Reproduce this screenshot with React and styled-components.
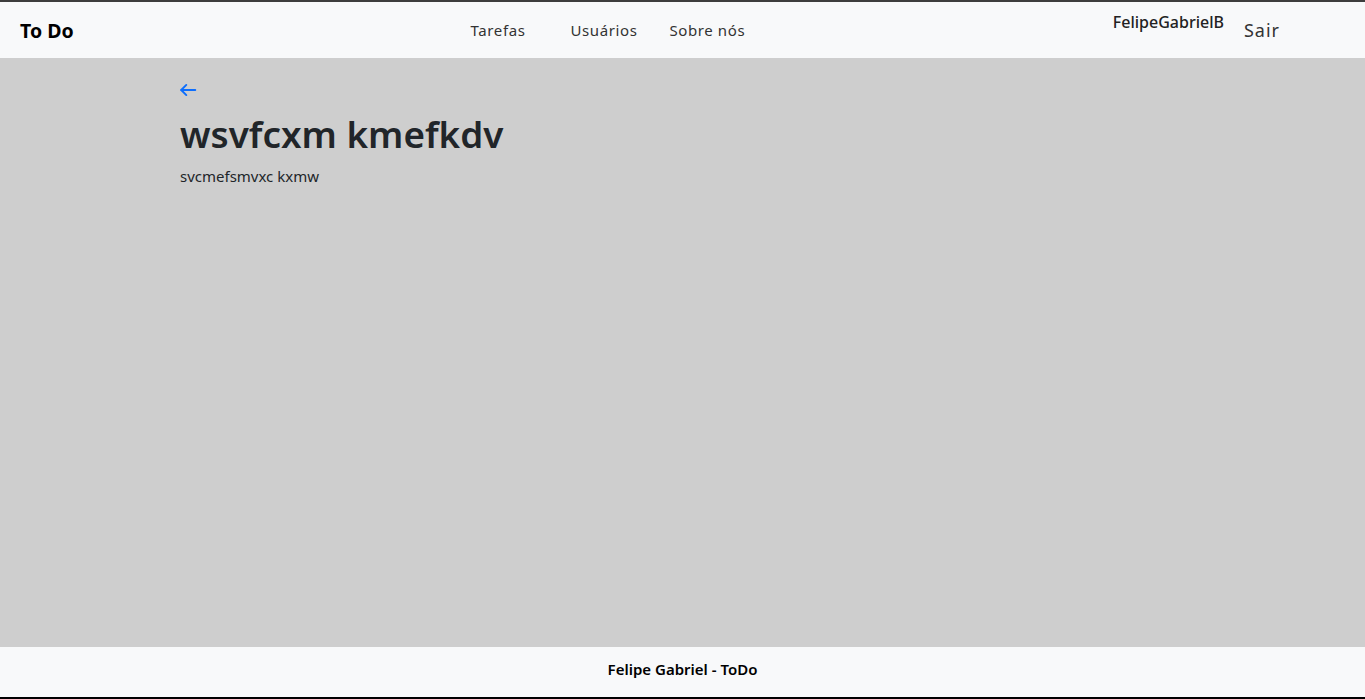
import React from "react";
import styled, { createGlobalStyle } from "styled-components";

const Global = createGlobalStyle`
  html, body { margin: 0; padding: 0; height: 100%; }
  body { font-family: "Noto Sans", "Open Sans", sans-serif; color: #212529; }
  #root { height: 100%; }
`;

const Page = styled.div`
  height: 100vh;
  display: flex;
  flex-direction: column;
  border-top: 2px solid #3d3d3d;
  border-bottom: 2px solid #000;
  box-sizing: border-box;
  background: #cecece;
`;

const Header = styled.header`
  height: 56px;
  flex: none;
  background: #f8f9fa;
  display: flex;
  align-items: center;
  padding: 0 85px 0 20px;
`;

const Brand = styled.div`
  font-size: 19.5px;
  font-weight: 700;
  color: #000;
  margin-top: 1px;
`;

const Nav = styled.nav`
  display: flex;
  margin-left: 397px;
`;

const NavLink = styled.a`
  font-size: 15px;
  letter-spacing: 0.6px;
  color: #333;
  text-decoration: none;
  margin-right: ${(p) => p.$gap}px;
`;

const Right = styled.div`
  display: flex;
  align-items: center;
  margin-left: auto;
  gap: 20px;
`;

const User = styled.span`
  font-size: 16px;
  font-weight: 500;
  color: #222;
  align-self: flex-start;
  margin-top: -7px;
`;

const Logout = styled.a`
  font-size: 18px;
  letter-spacing: 1px;
  color: #333;
`;

const Main = styled.main`
  flex: 1;
  padding: 23px 180px 0;
`;

const Back = styled.a`
  display: flex;
  color: #0d6efd;
  margin-left: -1px;
`;

const Title = styled.h1`
  font-size: 36.8px;
  font-weight: 600;
  margin: 13px 0 10px;
  line-height: 1.2;
  color: #212529;
`;

const Desc = styled.p`
  font-size: 15px;
  margin: 0;
  color: #212529;
`;

const Footer = styled.footer`
  height: 50px;
  flex: none;
  background: #f8f9fa;
  display: flex;
  align-items: center;
  justify-content: center;
  padding-bottom: 6px;
  box-sizing: border-box;
  font-size: 15px;
  font-weight: 600;
  color: #000;
`;

export default function App() {
  return (
    <>
      <Global />
      <Page>
        <Header>
          <Brand>To Do</Brand>
          <Nav>
            <NavLink $gap={45}>Tarefas</NavLink>
            <NavLink $gap={32}>Usuários</NavLink>
            <NavLink $gap={0}>Sobre nós</NavLink>
          </Nav>
          <Right>
            <User>FelipeGabrielB</User>
            <Logout>Sair</Logout>
          </Right>
        </Header>
        <Main>
          <Back>
            <svg width="18" height="18" viewBox="0 0 16 16" fill="none" stroke="currentColor" strokeWidth="1.7" strokeLinecap="round" strokeLinejoin="round">
              <path d="M14.5 8H2" />
              <path d="M6.5 3.5L2 8l4.5 4.5" />
            </svg>
          </Back>
          <Title>wsvfcxm kmefkdv</Title>
          <Desc>svcmefsmvxc kxmw</Desc>
        </Main>
        <Footer>Felipe Gabriel - ToDo</Footer>
      </Page>
    </>
  );
}
